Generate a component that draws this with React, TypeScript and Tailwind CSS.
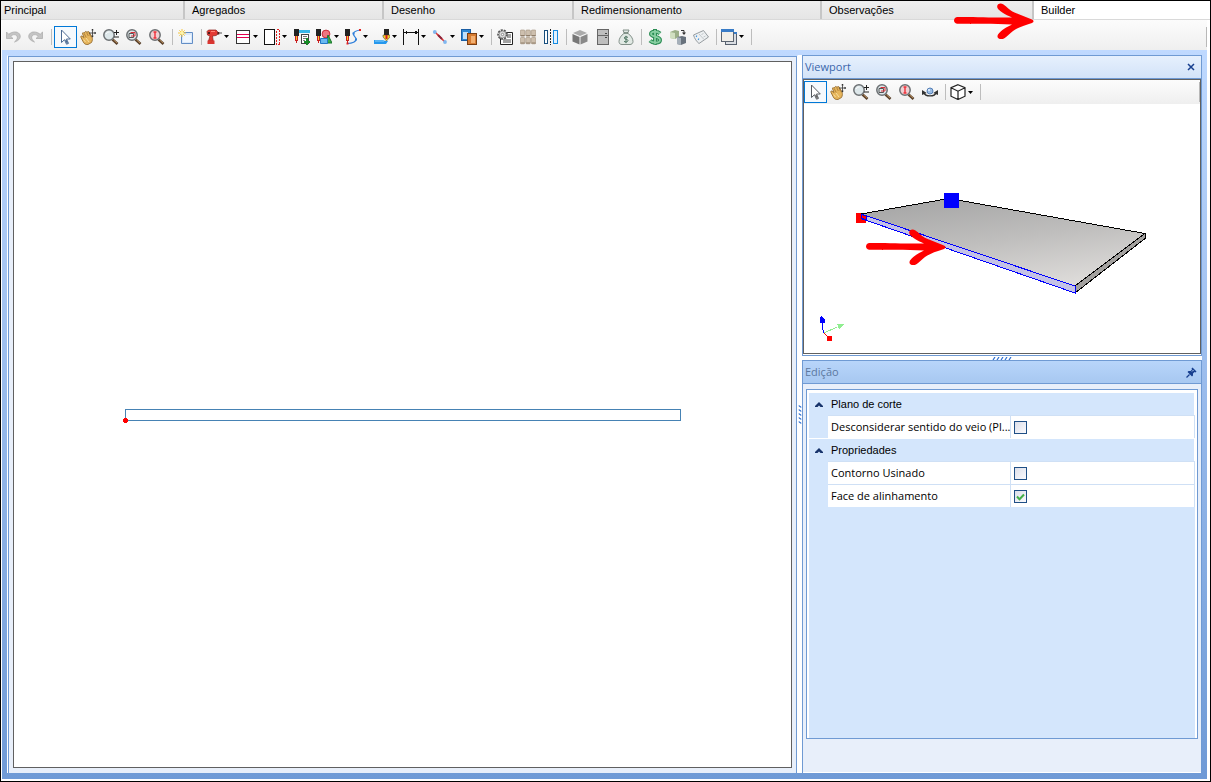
import { useState } from "react";
import type { ReactNode } from "react";
import clsx from "clsx";

type Tool = { name: string; icon: ReactNode; menu?: boolean; active?: boolean };

const Svg = ({ children, crisp }: { children: ReactNode; crisp?: boolean }) => (
  <svg viewBox="0 0 16 16" className="size-4 shrink-0" fill="none" shapeRendering={crisp ? "crispEdges" : "auto"}>
    {children}
  </svg>
);

const UndoIcon = ({ flip }: { flip?: boolean }) => (
  <Svg>
    <g transform={flip ? "translate(16 0) scale(-1 1)" : undefined}>
      <path d="M1.500 3v6.500H8L5.700 7.300C7.500 5.500 10 5 11.500 6.500s1 4-2 6.500c5-1.500 7-5 5-8S7 2.500 3.800 5.300Z" fill="#c4c4c4" stroke="#a8a8a8" strokeWidth=".7" />
    </g>
  </Svg>
);

const CursorIcon = ({ gray }: { gray?: boolean }) => (
  <Svg>
    <path d="M4.500 1v12.500l3-2.800 2 4.500 2-.8-2-4.400h3.800Z" fill="#fff" stroke={gray ? "#555a60" : "#4c6a92"} />
    <path d="m8 11 1.800 3.800 1.300-.6-1.700-3.700Z" fill={gray ? "#666" : "#4c6a92"} />
  </Svg>
);

const HandIcon = () => (
  <Svg>
    <path d="M1 8.500c-.8-1 .3-2 1.200-1.200L4 8.500 2.500 4.800c-.3-1.300 1-1.600 1.500-.6L5 3c.5-1 1.500-.7 1.700.2L8 2.700c.8-.3 1.300.3 1.500 1L12 8c.7 2 .5 3.500-.5 5.500L8 15.500c-3 .3-4-1-5-3Z" fill="#e6b55c" stroke="#8d6225" strokeWidth=".8" />
    <path d="m4.200 4.500 2 4M6.700 3.600 8.300 7M9 3.700l1.500 3.800" stroke="#9c6d2b" strokeWidth=".7" />
    <path d="M3.500 10.500 5.500 13M6 9l3 4" stroke="#f9df9e" />
    <path d="M12.500 0v8M9 4h7" stroke="#333" strokeWidth=".8" />
    <path d="m12.500-.5 1.300 1.800h-2.600ZM12.500 8.500l1.300-1.800h-2.600ZM16.300 4l-1.800-1.300v2.600Z" fill="#333" />
  </Svg>
);

const ZoomIcon = ({ kind }: { kind: "scale" | "window" | "fit" }) => (
  <Svg>
    <path d="m9.500 10.500 5 4.500" stroke="#59402b" strokeWidth="2.600" />
    <path d="m10.500 10.800 3.500 3.200" stroke="#b68b58" />
    <circle cx="6" cy="6" r="5.200" fill={kind === "fit" ? "#efd0d2" : "#dde7ea"} stroke="#6c7073" strokeWidth="1.500" />
    {kind === "scale" && <path d="M11 3.500h5M13.500 1v5M11 8h5" stroke="#222" />}
    {kind === "scale" && <path d="M3 5c.7-1.500 2-2 3.500-2" stroke="#fff" />}
    {kind === "window" && <path d="M3 4.500h4.500v4H3Z" stroke="#555" />}
    {kind === "window" && <path d="M4.500 3.500h4.500v3.500H5" stroke="#dd303b" />}
    {kind === "fit" && <path d="M6 2.500v7M4.500 3h3M4.500 9h3" stroke="#f0303a" strokeWidth="1.400" />}
  </Svg>
);

const NewIcon = () => (
  <Svg>
    <path d="M3.500 3.500h11v11h-11Z" fill="#dbe9fa" stroke="#638ec6" />
    <path d="M5 6h8v7H5Z" fill="#f0f7ff" />
    <path d="M4 0v8M0 4h8M1.300 1.300l5.400 5.400M6.700 1.300 1.300 6.700" stroke="#f4c53f" />
    <circle cx="4" cy="4" r="1.800" fill="#fff5a8" />
  </Svg>
);

const DrillIcon = () => (
  <Svg>
    <path d="M1 2.500 2.500 1H10l1.500 1.500v3L10 6.500 6.500 7l.7 5H2.500L4 7 1.500 6Z" fill="#e43b35" stroke="#8d1f1c" strokeWidth=".7" />
    <path d="M1.500 11.500h7V15h-7Z" fill="#d93530" />
    <path d="M11.500 3h1.800v2.500h-1.800ZM2 3h2v2H2Z" fill="#551b1b" />
    <path d="M13 4h3" stroke="#555" />
    <path d="M5 2.500h4" stroke="#ff8175" />
  </Svg>
);

const ShelvesIcon = () => (
  <Svg crisp>
    <path d="M1.500 1.500h13v13h-13Z" fill="#fff" stroke="#333" />
    <path d="M2 5.500h12M2 8.500h12" stroke="#e3004f" />
  </Svg>
);

const EdgeIcon = () => (
  <Svg crisp>
    <path d="M.500.500h10v15h-10Z" fill="#fff" stroke="#111" />
    <path d="M12.500.500h3v15h-3Z" stroke="#e02020" strokeDasharray="2 1" />
  </Svg>
);

const MillBit = () => (
  <>
    <path d="M0 0h5v7H0Z" fill="#222" />
    <path d="M1 7h3v5H1Z" fill="#f4c52c" />
    <path d="M1 7h1v5H1Zm2 0h1v5H3ZM2 11h1v3H2Z" fill="#c92020" />
  </>
);

const MillListIcon = () => (
  <Svg crisp>
    <MillBit />
    <path d="M5 1h11v3H5Z" fill="#38b6e8" />
    <path d="M7.500 5.500h7v9h-7Z" fill="#fff" stroke="#444" />
    <path d="M9 7.500h4M9 9.500h4M9 11.500h2" stroke="#777" />
    <path d="M13 9v7M9.500 12.500h7" stroke="#168d25" strokeWidth="2" />
  </Svg>
);

const MillShapesIcon = () => (
  <Svg>
    <MillBit />
    <circle cx="10" cy="5" r="3.900" fill="#ee7681" stroke="#c92a39" />
    <path d="m12 6 4 8h-6Z" fill="#3aad46" stroke="#16752a" />
    <path d="M4.500 9.500h7v5h-7Z" fill="#69b9f1" stroke="#2377c8" />
  </Svg>
);

const MillPathIcon = () => (
  <Svg>
    <MillBit />
    <path d="M2.500 14.500C7 14.500 11.500 13 11 9.500 10.500 7.500 8 7 8.500 4.500 9 2.500 12 1.500 15 1" stroke="#2f7fda" strokeWidth="1.200" />
    <path d="M1.500 13.500h2v2h-2ZM14 0h2v2h-2Z" fill="#e32121" />
    <path d="M10 9.500h2v2h-2ZM7.500 3.500h2v2h-2Z" fill="#2f7fda" />
  </Svg>
);

const PocketIcon = () => (
  <Svg>
    <path d="M10 0h5v6h-5Z" fill="#242424" />
    <path d="M9 6h7v2l-3.500 4L9 8Z" fill="#f4d02a" stroke="#333" strokeWidth=".5" />
    <path d="M11.500 6h2v4h-2Z" fill="#d42020" />
    <path d="M0 11h9l2 1h3l-2 3H0Z" fill="#2698ed" />
    <path d="M1 12h9" stroke="#8bd0fb" />
  </Svg>
);

const DimensionIcon = () => (
  <Svg crisp>
    <path d="M.500 0v16M15.500 0v16M1 3.500h14" stroke="#111" />
    <path d="m1 3.500 3-2v4ZM15 3.500l-3-2v4Z" fill="#111" />
  </Svg>
);

const LineIcon = () => (
  <Svg>
    <path d="m3 3 10 10" stroke="#e22d2d" strokeWidth="1.500" />
    <circle cx="2.800" cy="3" r="1.900" fill="#80b7ef" />
    <circle cx="13" cy="13" r="1.900" fill="#80b7ef" />
    <path d="m6 6 4 4" stroke="#8b2438" strokeWidth="2" />
  </Svg>
);

const CopyPanelIcon = () => (
  <Svg crisp>
    <path d="M.500.500h9v11h-9Z" fill="#2e87d2" stroke="#1a5ea4" />
    <path d="M2 3h5v7H2Z" fill="#c1e0fa" />
    <path d="M6.500 4.500h9v11h-9Z" fill="#d67b31" stroke="#7a3e13" />
    <path d="M10 7h4v7h-4Z" fill="#f2af70" />
  </Svg>
);

const GearReportIcon = () => (
  <Svg>
    <path d="M3.500 3.500h12v12h-12Z" fill="#fff" stroke="#222" />
    <path d="M10 6h4M10 8h4M6 11h8M6 13h8" stroke="#444" />
    <circle cx="5.500" cy="5.500" r="4.300" fill="#eee" stroke="#555" strokeWidth="2" strokeDasharray="2 1" />
    <circle cx="5.500" cy="5.500" r="3.500" fill="#ddd" stroke="#777" strokeWidth=".7" />
    <circle cx="5.500" cy="5.500" r="1.200" fill="#fff" stroke="#666" strokeWidth=".7" />
  </Svg>
);

const BlocksIcon = () => (
  <Svg>
    {[0, 5.500, 11].map((x) =>
      [1, 8.500].map((y) => (
        <g key={`${x}-${y}`}>
          <rect x={x + 0.3} y={y} width="4.600" height="6.300" rx="1" fill="#cdbfae" stroke="#a08f7b" strokeWidth=".6" />
          <path d={`M${x + 0.6} ${y + 5.500}h4`} stroke="#8f7e6b" />
        </g>
      )),
    )}
  </Svg>
);

const MirrorIcon = () => (
  <Svg crisp>
    <path d="M1.500 1.500h3v13h-3Z" fill="#fff" stroke="#174e7d" />
    <path d="M10.500 1.500h4v13h-4Z" fill="#dff1ff" stroke="#168be0" />
    <path d="M7.500 0v16" stroke="#222" strokeDasharray="2 1" />
  </Svg>
);

const SolidBoxIcon = () => (
  <Svg>
    <path d="m8 1 7 3-7 3-7-3Z" fill="#ababab" />
    <path d="M.5 5 7.500 8v7.500l-7-3Z" fill="#777" />
    <path d="m15.500 5-7 3v7.500l7-3Z" fill="#898989" />
  </Svg>
);

const DoorIcon = () => (
  <Svg crisp>
    <path d="M2.500.500h11v15h-11Z" fill="#bebebe" stroke="#666" />
    <path d="M3 6.500h10" stroke="#666" />
    <path d="M10 4h2v1h-2ZM10 8h2v1h-2Z" fill="#444" />
  </Svg>
);

const MoneyBagIcon = () => (
  <Svg>
    <path d="M5 1h6L9.700 4.200C13 6.500 15 9.500 15 12.500c0 2-1.500 3-3 3H4c-2 0-3-1-3-3 0-3 2-6 5.200-8.300Z" fill="#e1e9e4" stroke="#829089" />
    <path d="M6 4h4" stroke="#697b70" strokeWidth="1.500" />
    <path d="M10 8.500C9 7.500 6.300 7.500 6.300 9s3.700 1 3.700 2.500S7 13.500 6 12.300M8 6.800v7.400" stroke="#4d7461" />
  </Svg>
);

const DollarIcon = () => (
  <Svg>
    <path d="M13 4.500C10.500 2 4 2 4 5s9 2.500 9 6-7.500 3.300-10 .7M8 0v16" stroke="#2c8e55" strokeWidth="4" />
    <path d="M13 4.500C10.500 2 4 2 4 5s9 2.500 9 6-7.500 3.300-10 .7M8 1v14" stroke="#88cfa2" strokeWidth="1.800" />
  </Svg>
);

const ReplaceBoxIcon = () => (
  <Svg>
    <path d="m0 3 5-2 4 1v6l-4 2-5-1Z" fill="#9caf89" />
    <path d="m0 3 5 1v6L0 9Z" fill="#d1dfc1" />
    <path d="m7 8 5-1 4 1v6l-5 2-4-1Z" fill="#68727d" />
    <path d="m7 8 4 1v7l-4-1Z" fill="#a6b0ba" />
    <path d="M11 1.500h3v3" stroke="#333" />
    <path d="M12 3.500h4L14 6Z" fill="#333" />
  </Svg>
);

const NotesIcon = () => (
  <Svg>
    <path d="m.5 6 10-4.500L15.500 8 6 14.500c-2.500-2-4.500-5-5.500-8.500Z" fill="#edf0f2" stroke="#959b9f" />
    <path d="m6 5 5 5.500M8.500 5.500l2-1M10.500 8l2-1" stroke="#c3c8cb" />
    <path d="m3 7 1 .5M5 10l1 .5" stroke="#4296df" strokeWidth="1.500" />
  </Svg>
);

const WindowsIcon = () => (
  <Svg crisp>
    <path d="M4.500 3.500h11v12h-11Z" fill="#d9dde3" stroke="#56606e" />
    <path d="M.500.500h12v12H.500Z" fill="#f0eee9" stroke="#5b6470" />
    <path d="M0 0h13v3H0ZM13 3h3v2h-3Z" fill="#397cc7" />
  </Svg>
);

const OrbitIcon = () => (
  <Svg>
    <path d="M2 8.500c1 4.500 11 4.500 12 0" stroke="#333" strokeWidth="1.300" />
    <path d="M-.2 11V5.800L4.800 9ZM16.200 11V5.800L11.200 9Z" fill="#333" />
    <circle cx="8" cy="7" r="3" fill="#9bbde5" stroke="#557fb5" />
    <circle cx="7" cy="6" r="1" fill="#e9f5ff" />
  </Svg>
);

const WireBoxIcon = () => (
  <Svg>
    <path d="m8 .7 7 3v8.500l-7 3.300-7-3.300V3.700Z M1 3.700l7 3.500 7-3.500M8 7.200v8.300" fill="#fff" stroke="#222" strokeWidth="1.200" />
  </Svg>
);

const navigation: Tool[] = [
  { name: "Selecionar", icon: <CursorIcon />, active: true },
  { name: "Mover", icon: <HandIcon /> },
  { name: "Zoom", icon: <ZoomIcon kind="scale" /> },
  { name: "Zoom janela", icon: <ZoomIcon kind="window" /> },
  { name: "Zoom total", icon: <ZoomIcon kind="fit" /> },
];

const mainTools: Tool[][] = [
  [
    { name: "Desfazer", icon: <UndoIcon /> },
    { name: "Refazer", icon: <UndoIcon flip /> },
  ],
  navigation,
  [{ name: "Novo", icon: <NewIcon /> }],
  [
    { name: "Furação", icon: <DrillIcon />, menu: true },
    { name: "Rasgo", icon: <ShelvesIcon />, menu: true },
    { name: "Borda", icon: <EdgeIcon />, menu: true },
    { name: "Lista de usinagens", icon: <MillListIcon /> },
    { name: "Formas", icon: <MillShapesIcon />, menu: true },
    { name: "Contorno", icon: <MillPathIcon />, menu: true },
    { name: "Rebaixo", icon: <PocketIcon />, menu: true },
    { name: "Cota", icon: <DimensionIcon />, menu: true },
    { name: "Linha", icon: <LineIcon />, menu: true },
    { name: "Copiar", icon: <CopyPanelIcon />, menu: true },
  ],
  [
    { name: "Relatório", icon: <GearReportIcon /> },
    { name: "Blocos", icon: <BlocksIcon /> },
    { name: "Espelhar", icon: <MirrorIcon /> },
  ],
  [
    { name: "Módulo", icon: <SolidBoxIcon /> },
    { name: "Porta", icon: <DoorIcon /> },
    { name: "Custo", icon: <MoneyBagIcon /> },
  ],
  [
    { name: "Preço", icon: <DollarIcon /> },
    { name: "Substituir", icon: <ReplaceBoxIcon /> },
    { name: "Notas", icon: <NotesIcon /> },
  ],
  [{ name: "Janelas", icon: <WindowsIcon />, menu: true }],
];

const viewTools: Tool[][] = [
  [
    { name: "Selecionar", icon: <CursorIcon gray />, active: true },
    ...navigation.slice(1),
    { name: "Orbitar", icon: <OrbitIcon /> },
  ],
  [{ name: "Vista", icon: <WireBoxIcon />, menu: true }],
];

function Toolbar({ groups, className }: { groups: Tool[][]; className: string }) {
  return (
    <div className={clsx("flex shrink-0 items-center bg-linear-to-b from-[#fcfcfc] to-[#efefef]", className)}>
      {groups.map((group, i) => (
        <div key={i} className="flex items-center">
          {group.map((tool) => (
            <button
              key={tool.name}
              aria-label={tool.name}
              className={clsx(
                "flex h-[22px] items-center justify-center",
                tool.menu ? "w-[29px] gap-0.5 pr-0.5" : "w-[23px] pr-px",
                tool.active && "border border-[#0078d7] bg-[#f5f9fd]",
              )}
            >
              {tool.icon}
              {tool.menu && (
                <svg viewBox="0 0 5 3" className="h-[3px] w-[5px] shrink-0">
                  <path d="M0 0h5L2.500 3Z" fill="#000" />
                </svg>
              )}
            </button>
          ))}
          <span className="mr-0.5 ml-[3px] h-4 w-px bg-[#bdbdbd]" />
        </div>
      ))}
      <span className="ml-auto h-5 w-px bg-[#b8b8b8]" />
    </div>
  );
}

const Arrow = ({ className }: { className: string }) => (
  <svg viewBox="0 0 80 36" className={clsx("pointer-events-none absolute h-9 w-20", className)}>
    <path
      d="M3 14C18 13.600 42 15 58 14.500C51 11.500 45 8 43.500 5C42 1.500 46-1 49.500 1.500C53 4 56 8 63 10.500L78 16.500C80 17.500 80 19 78 20C70 22.500 63 25 59 28C55 31 53 34 50 35.500C46 37.500 42 35 44 31.500C47 27 53 24 58 21.500C40 20.800 18 21 3 20.800C-1 20-1 15 3 14Z"
      fill="#f00"
    />
  </svg>
);

// Grip dots of the pane splitters
const Grip = ({ vertical }: { vertical?: boolean }) => (
  <svg viewBox="0 0 20 3" className={clsx("h-[3px] w-5 shrink-0", vertical && "rotate-90")}>
    <path d="m1 3 2-3M5 3l2-3M9 3l2-3M13 3l2-3M17 3l2-3" stroke="#2f6fd0" strokeWidth="1.200" />
  </svg>
);

const Drawing = () => (
  <svg viewBox="0 0 777 705" className="h-full w-full" shapeRendering="crispEdges">
    <path d="M111.500 347.500h555v11h-555Z" fill="none" stroke="#4682b4" />
    <path d="M110 356h3v1h1v3h-1v1h-3v-1h-1v-3h1Z" fill="#f00" />
  </svg>
);

const Scene = () => (
  <svg viewBox="0 0 396 249" className="h-full w-full">
    <defs>
      <linearGradient id="board" x1="0.200" y1="0" x2="0.650" y2="1">
        <stop offset="0" stopColor="#a6a6a6" />
        <stop offset="0.500" stopColor="#bfbebd" />
        <stop offset="1" stopColor="#dddbd9" />
      </linearGradient>
    </defs>
    <path d="M52 109h10v10H52Z" fill="#f00" />
    <path d="M57 110 145 94.500 341 129.500 271 182Z" fill="url(#board)" stroke="#000" shapeRendering="crispEdges" />
    <path d="M271 182 341 129.500v5L271 189Z" fill="#a3a19f" stroke="#000" shapeRendering="crispEdges" />
    <path d="M57 110 271 182v7L57 114.500Z" fill="#c4c2e6" stroke="#00f" shapeRendering="crispEdges" />
    <path d="M57 110l5 2v4l-5-2Z" fill="#f00" stroke="#00f" shapeRendering="crispEdges" />
    <path d="M140 89h15v15h-15Z" fill="#00f" />
    <g shapeRendering="crispEdges">
      <path d="m19.500 229-2-13" stroke="#00f" />
      <path d="m17 212 4 4v3h-5v-5Z" fill="#00f" />
      <path d="m20 229 13-6" stroke="#90ee90" />
      <path d="m41 220-8 0 2 5Z" fill="#90ee90" />
      <path d="m20 229 5 5" stroke="#f00" />
      <path d="M23 232h5v5h-5Z" fill="#f00" />
    </g>
  </svg>
);

const sections = [
  { title: "Plano de corte", rows: [{ id: "veio", label: "Desconsiderar sentido do veio (Pl...", on: false }] },
  {
    title: "Propriedades",
    rows: [
      { id: "contorno", label: "Contorno Usinado", on: false },
      { id: "face", label: "Face de alinhamento", on: true },
    ],
  },
];

function PropertyGrid() {
  return (
    <div className="flex-1 border border-[#6f9ad3] bg-white p-0.5 pb-0">
      <div className="h-full bg-[#d4e6fc]">
        {sections.map((section) => (
          <section key={section.title}>
            <h3 className="flex h-[23px] items-center border-t border-r border-white bg-[#d4e6fc] font-['Liberation_Sans',sans-serif] text-[11px] text-black">
              <button aria-label="Recolher" className="flex h-full w-[19px] items-center justify-center">
                <svg viewBox="0 0 8 5" className="h-[5px] w-2">
                  <path d="M0 5V4L4 0l4 4v1H5.500L4 3.500 2.500 5Z" fill="#17336b" />
                </svg>
              </button>
              <span className="pl-[3px]">{section.title}</span>
            </h3>
            {section.rows.map((row) => (
              <div key={row.id} className="ml-[19px] grid h-[23px] grid-cols-2 border-t border-r border-[#cfe0f5] bg-white">
                <label htmlFor={row.id} className="border-r border-[#cfe0f5] pl-[3px] text-[11px] leading-[22px] whitespace-nowrap">
                  {row.label}
                </label>
                <div className="grid items-center justify-start pl-[3px]">
                  <input
                    id={row.id}
                    type="checkbox"
                    defaultChecked={row.on}
                    className="peer col-start-1 row-start-1 size-[13px] appearance-none border border-[#1f4f86] bg-linear-to-br from-[#dcdfea] to-[#fafafd]"
                  />
                  <svg viewBox="0 0 13 13" className="pointer-events-none invisible col-start-1 row-start-1 size-[13px] peer-checked:visible">
                    <path d="m3 6.500 2.500 2.800L10 4.500" fill="none" stroke="#43b049" strokeWidth="2" />
                  </svg>
                </div>
              </div>
            ))}
          </section>
        ))}
      </div>
    </div>
  );
}

const tabs = [
  { title: "Principal", width: "w-[184px] pl-[3px]" },
  { title: "Agregados", width: "w-[199px] pl-[7px]" },
  { title: "Desenho", width: "w-[190px] pl-[7px]" },
  { title: "Redimensionamento", width: "w-[248px] pl-[7px]" },
  { title: "Observações", width: "w-[212px] pl-[7px]" },
  { title: "Builder", width: "flex-1 pl-[7px]" },
];

export default function App() {
  const [tab, setTab] = useState("Builder");

  return (
    <div className="relative flex h-screen flex-col border border-black bg-white font-['Open_Sans',sans-serif] text-black">
      <nav className="flex h-[19px] shrink-0 border-b border-[#d9d9d9] font-['Liberation_Sans',sans-serif] text-[11px]">
        {tabs.map((t) => (
          <button
            key={t.title}
            onClick={() => setTab(t.title)}
            className={clsx("text-left", t.width, tab === t.title ? "bg-white" : "border-r-2 border-[#c6c6c6] bg-linear-to-b from-[#efefef] to-[#e5e5e5]")}
          >
            {t.title}
          </button>
        ))}
      </nav>

      <div className="mr-[3px] mb-0.5 ml-px flex min-h-0 flex-1 flex-col">
        <Toolbar groups={mainTools} className="h-[30px] pt-[3px]" />

        <main className="flex min-h-0 flex-1 bg-linear-to-b from-[#bfd9ff] to-[#6f9ad6] px-[5px] pt-[5px] pb-1.5">
          <div className="min-w-0 flex-1 border border-b-0 border-white border-t-[#bfd9ff]">
            <div className="h-full border border-b-0 border-[#6f9ad3] bg-[#e8effa] p-1 pb-[5px]">
              <div className="h-full border border-[#606060] bg-white">
                <Drawing />
              </div>
            </div>
          </div>

          <div className="flex w-1 shrink-0 items-center justify-center bg-white">
            <Grip vertical />
          </div>

          <aside className="flex w-[400px] shrink-0 flex-col bg-white">
            <section className="flex h-[301px] shrink-0 flex-col border border-[#6f9ad3] bg-white">
              <header className="flex h-[23px] shrink-0 items-center justify-between border-b border-[#6f9ad3] bg-linear-to-b from-[#e6f0fd] to-[#d3e3f8] pr-1.5 pl-0.5 text-[11px] text-[#3a66ab]">
                <h2>Viewport</h2>
                <button aria-label="Fechar">
                  <svg viewBox="0 0 8 8" className="size-2">
                    <path d="m1 1 6 6M7 1 1 7" stroke="#173f8f" strokeWidth="1.500" />
                  </svg>
                </button>
              </header>
              <div className="mb-px flex min-h-0 flex-1 flex-col border border-[#606060]">
                <Toolbar groups={viewTools} className="h-6" />
                <div className="relative min-h-0 flex-1">
                  <Scene />
                  <Arrow className="top-[125px] left-[62px]" />
                </div>
              </div>
            </section>

            <div className="flex h-1 shrink-0 items-center justify-center">
              <Grip />
            </div>

            <section className="flex min-h-0 flex-1 flex-col border border-b-0 border-[#6f9ad3]">
              <header className="flex h-[23px] shrink-0 items-center justify-between border-b border-[#6f9ad3] bg-linear-to-b from-[#b8d5fa] to-[#a7c8f1] pr-1 pl-0.5 text-[11px] text-[#5c789f]">
                <h2>Edição</h2>
                <button aria-label="Fixar">
                  <svg viewBox="0 0 11 11" className="size-[11px]">
                    <path d="M6.500.5 10.500 4.500 9.500 5.500 8.500 5 7 6.500v2L6 9.500 1.500 5l1-1h2L6 2.500l-.5-1Z" fill="#173f8f" />
                    <path d="M3.500 7.500.500 10.500" stroke="#173f8f" strokeWidth="1.200" />
                    <path d="M6 4.500 7.500 3" stroke="#b8d5fa" />
                  </svg>
                </button>
              </header>
              <div className="flex min-h-0 flex-1 flex-col border-b border-white bg-[#e8effa] px-[3px] pt-[5px] pb-[33px]">
                <PropertyGrid />
              </div>
            </section>
          </aside>
        </main>
      </div>

      <Arrow className="top-0.5 left-[953px]" />
    </div>
  );
}
